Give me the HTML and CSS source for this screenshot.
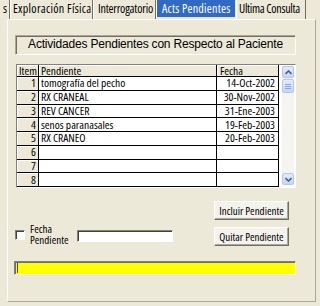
FILE: index.html
```html
<!DOCTYPE html>
<html lang="es">
<head>
<meta charset="utf-8">
<title>Acts Pendientes</title>
<link rel="stylesheet" href="styles.css">
</head>
<body>
<div class="tabs">
  <div class="tab tab-cut">s</div>
  <div class="tab tab-explo">Exploración Física</div>
  <div class="tab tab-inter">Interrogatorio</div>
  <div class="tab tab-active">Acts Pendientes</div>
  <div class="tab tab-ultima">Ultima Consulta</div>
</div>
<div class="panel">
  <div class="title">Actividades Pendientes con Respecto al Paciente</div>
  <div class="grid">
    <table class="flex">
      <colgroup><col class="c-item"><col class="c-pend"><col class="c-fecha"></colgroup>
      <thead>
        <tr><th class="fixed">Item</th><th class="fixed">Pendiente</th><th class="fixed">Fecha</th></tr>
      </thead>
      <tbody>
        <tr><td class="fixed num">1</td><td>tomografía del pecho</td><td class="date">14-Oct-2002</td></tr>
        <tr><td class="fixed num">2</td><td>RX CRANEAL</td><td class="date">30-Nov-2002</td></tr>
        <tr><td class="fixed num">3</td><td>REV CANCER</td><td class="date">31-Ene-2003</td></tr>
        <tr><td class="fixed num">4</td><td>senos paranasales</td><td class="date">19-Feb-2003</td></tr>
        <tr><td class="fixed num">5</td><td>RX CRANEO</td><td class="date">20-Feb-2003</td></tr>
        <tr><td class="fixed num">6</td><td></td><td class="date"></td></tr>
        <tr><td class="fixed num">7</td><td></td><td class="date"></td></tr>
        <tr><td class="fixed num">8</td><td></td><td class="date"></td></tr>
      </tbody>
    </table>
    <div class="scrollbar">
      <div class="sb-btn">
        <svg width="7" height="5" viewBox="0 0 7 5"><path d="M0.5 4 L3.5 1 L6.5 4" fill="none" stroke="#4D6185" stroke-width="1.6"/></svg>
      </div>
      <div class="sb-thumb"><span></span><span></span><span></span></div>
      <div class="sb-track"></div>
      <div class="sb-btn">
        <svg width="7" height="5" viewBox="0 0 7 5"><path d="M0.5 1 L3.5 4 L6.5 1" fill="none" stroke="#4D6185" stroke-width="1.6"/></svg>
      </div>
    </div>
  </div>
  <div class="controls">
    <div class="left">
      <span class="check"></span>
      <span class="check-label">Fecha<br>Pendiente</span>
      <span class="textbox"></span>
    </div>
    <div class="buttons">
      <button class="btn">Incluir Pendiente</button>
      <button class="btn">Quitar Pendiente</button>
    </div>
  </div>
  <div class="status"><span class="caret"></span></div>
</div>
</body>
</html>
```
FILE: styles.css
```css
* { box-sizing: border-box; margin: 0; padding: 0; }

body {
  width: 320px;
  height: 306px;
  overflow: hidden;
  background: #ECE9D8;
  font-family: "Open Sans", "Liberation Sans", Arial, sans-serif;
  font-stretch: 82%;
  font-size: 11.5px;
  color: #000;
}

/* tabs */
.tabs { display: flex; height: 19px; font-size: 12px; }
.tab {
  height: 19px;
  line-height: 17px;
  white-space: nowrap;
  overflow: hidden;
  border-left: 1px solid #fff;
  border-right: 1px solid #716F64;
}
.tab-cut { width: 10px; border-left: 0; text-align: right; padding-right: 2px; }
.tab-explo { width: 83px; padding-left: 2px; letter-spacing: 0.3px; }
.tab-inter { width: 63px; padding-left: 4px; letter-spacing: -0.2px; }
.tab-active {
  width: 80px;
  height: 17px;
  background: #316AC5;
  color: #fff;
  padding-left: 5px;
  letter-spacing: 0.25px;
  border-right: 1px solid #ECE9D8;
}
.tab-ultima { width: 70px; padding-left: 2px; letter-spacing: -0.3px; }

/* panel */
.panel {
  margin-left: 7px;
  width: 309px;
  height: 283px;
  border: 1px solid;
  border-color: #fff #ACA899 #ACA899 #fff;
}

.title {
  margin: 15px 19px 0 7px;
  height: 20px;
  border: 1px solid;
  border-color: #ACA899 #fff #fff #ACA899;
  box-shadow: inset 1px 1px 0 #716F64;
  font-family: "Liberation Sans", Arial, sans-serif;
  font-stretch: normal;
  font-size: 12px;
  letter-spacing: -0.2px;
  line-height: 16px;
  text-align: center;
  white-space: nowrap;
}

/* grid */
.grid {
  display: flex;
  margin: 9px 19px 0 8px;
  width: 280px;
  height: 124px;
  border: 1px solid;
  border-color: #808080 #fff #fff #808080;
  background: #fff;
}
.flex {
  width: 262px;
  table-layout: fixed;
  border-collapse: separate;
  border-spacing: 0;
  align-self: flex-start;
}
.c-item { width: 22px; }
.c-pend { width: 178px; }
.c-fecha { width: 62px; }
.flex th, .flex td {
  border-right: 1px solid #000;
  border-bottom: 1px solid #000;
  font-weight: normal;
  text-align: left;
  white-space: nowrap;
  padding: 0 0 0 2px;
  vertical-align: middle;
}
.flex thead th { height: 12px; line-height: 11px; }
.flex tbody td { height: 13.75px; line-height: 12px; }
.flex .fixed { background: #ECE9D8; box-shadow: inset 1px 1px 0 #fff; }
.flex th.fixed:nth-child(3) { padding-left: 3px; }
.flex .num { text-align: right; padding: 0 2px 0 0; }
.flex .date { text-align: right; padding: 0 3px 0 0; }

/* scrollbar */
.scrollbar {
  display: flex;
  flex-direction: column;
  width: 12px;
  margin: 1px 1px 2px 3px;
  background: #F5F4EF;
}
.sb-btn, .sb-thumb {
  border: 1px solid #B5C8F3;
  border-radius: 2px;
  background: linear-gradient(#E3EBFE, #C4D5FB);
}
.sb-btn {
  height: 12px;
  display: flex;
  align-items: center;
  justify-content: center;
}
.sb-thumb {
  margin-top: 1px;
  height: 14px;
  display: flex;
  flex-direction: column;
  align-items: center;
  justify-content: center;
  gap: 1px;
}
.sb-thumb span { width: 6px; height: 1px; background: #8CA6E3; }
.sb-track { flex: 1; }

/* controls */
.controls {
  display: flex;
  justify-content: space-between;
  align-items: flex-start;
  margin: 13px 19px 0 7px;
}
.left {
  display: flex;
  align-items: center;
  margin-top: 22px;
}
.check {
  width: 10px;
  height: 10px;
  margin-top: 1px;
  background: #fff;
  border: 1px solid;
  border-color: #808080 #fff #fff #808080;
  box-shadow: inset 1px 1px 0 #404040;
}
.check-label {
  width: 47px;
  margin-left: 5px;
  font-size: 11px;
  line-height: 11px;
  white-space: nowrap;
}
.textbox {
  width: 96px;
  height: 12px;
  margin-top: 4px;
  background: #fff;
  border: 1px solid;
  border-color: #808080 #fff #fff #808080;
  box-shadow: inset 1px 1px 0 #404040;
}
.buttons {
  display: flex;
  flex-direction: column;
  gap: 7px;
  margin-right: 7px;
}
.btn {
  width: 75px;
  height: 19px;
  font: inherit;
  font-size: 11px;
  font-stretch: 80%;
  white-space: nowrap;
  color: #000;
  background: #F3F2EC;
  border: 1px solid;
  border-color: #fff #716F64 #716F64 #fff;
  box-shadow: inset -1px -1px 0 #ACA899;
}

/* status */
.status {
  display: flex;
  align-items: center;
  margin: 15px 19px 0 6px;
  height: 14px;
  background: #FFFF00;
  border: 1px solid;
  border-color: #808080 #F4F3EE #F4F3EE #808080;
  box-shadow: inset 1px 1px 0 #716F64;
}
.caret {
  width: 1px;
  height: 10px;
  margin-left: 2px;
  background: #404040;
}
```
